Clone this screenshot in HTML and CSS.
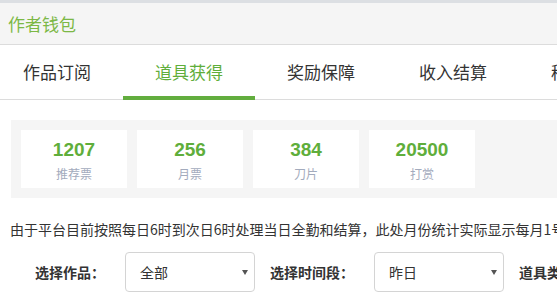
FILE: index.html
```html
<!DOCTYPE html>
<html lang="zh-CN">
<head>
<meta charset="utf-8">
<title>作者钱包</title>
<link rel="stylesheet" href="styles.css">
</head>
<body>
<div class="topbar"></div>
<header class="head"><h1 class="title">作者钱包</h1></header>
<nav class="tabs">
  <div class="tab">作品订阅</div>
  <div class="tab active">道具获得</div>
  <div class="tab">奖励保障</div>
  <div class="tab">收入结算</div>
  <div class="tab">稿费明细</div>
</nav>
<section class="stats">
  <div class="card"><div class="num">1207</div><div class="lbl">推荐票</div></div>
  <div class="card"><div class="num">256</div><div class="lbl">月票</div></div>
  <div class="card"><div class="num">384</div><div class="lbl">刀片</div></div>
  <div class="card"><div class="num">20500</div><div class="lbl">打赏</div></div>
</section>
<p class="notice">由于平台目前按照每日6时到次日6时处理当日全勤和结算，此处月份统计实际显示每月1号6时至次月1号6时的数据。</p>
<div class="filters">
  <span class="flabel">选择作品：</span>
  <div class="select"><span class="sval">全部</span><span class="arrow"></span></div>
  <span class="flabel">选择时间段：</span>
  <div class="select"><span class="sval">昨日</span><span class="arrow"></span></div>
  <span class="flabel">道具类型：</span>
</div>
</body>
</html>
```
FILE: styles.css
```css
html, body {
  margin: 0;
  padding: 0;
  background: #fff;
  overflow: hidden;
}
body {
  width: 557px;
  font-family: "Noto Sans CJK SC", "Liberation Sans", sans-serif;
  color: #333;
}
.topbar {
  height: 3px;
  background: #dcdfe3;
}
.head {
  height: 41px;
  background: #f5f5f5;
  border-bottom: 1px solid #dcdcdc;
}
.title {
  margin: 0;
  padding-left: 8px;
  font-size: 17px;
  font-weight: normal;
  line-height: 41px;
  color: #7cb845;
}
.tabs {
  display: flex;
  height: 54px;
  border-bottom: 1px solid #dcdcdc;
  margin-left: -9px;
  white-space: nowrap;
}
.tab {
  flex: 0 0 auto;
  box-sizing: border-box;
  width: 132px;
  height: 55px;
  margin-bottom: -1px;
  text-align: center;
  font-size: 17px;
  line-height: 54px;
  color: #333;
  border-bottom: 4px solid transparent;
  overflow: visible;
}
.tab.active {
  color: #5fae3b;
  border-bottom-color: #62ad3e;
}
.stats {
  display: flex;
  gap: 10px;
  margin: 20px 0 0 11px;
  padding: 10px;
  background: #f5f5f5;
}
.card {
  width: 106px;
  height: 58px;
  box-sizing: border-box;
  padding-top: 9px;
  background: #fff;
  text-align: center;
}
.num {
  font-family: "Liberation Sans", sans-serif;
  font-size: 19px;
  font-weight: bold;
  line-height: 22px;
  color: #5fae3b;
}
.lbl {
  margin-top: 4px;
  font-size: 12px;
  line-height: 18px;
  color: #a3abbd;
}
.notice {
  margin: 21px 0 0 10px;
  font-size: 14px;
  line-height: 20px;
  white-space: nowrap;
  color: #333;
}
.filters {
  display: flex;
  align-items: center;
  margin-top: 13px;
  padding-left: 20px;
  white-space: nowrap;
}
.flabel {
  margin-left: 15px;
  margin-right: 20px;
  font-size: 14px;
  font-weight: bold;
  color: #333;
  flex: 0 0 auto;
}
.select {
  flex: 0 0 auto;
  display: flex;
  align-items: center;
  justify-content: space-between;
  box-sizing: border-box;
  width: 130px;
  height: 40px;
  padding: 0 6px 0 14px;
  border: 1px solid #d4d4d4;
  border-radius: 4px;
  background: #fff;
}
.sval {
  font-size: 14px;
  color: #333;
}
.arrow {
  width: 0;
  height: 0;
  border-left: 3px solid transparent;
  border-right: 3px solid transparent;
  border-top: 5px solid #555;
}
```
